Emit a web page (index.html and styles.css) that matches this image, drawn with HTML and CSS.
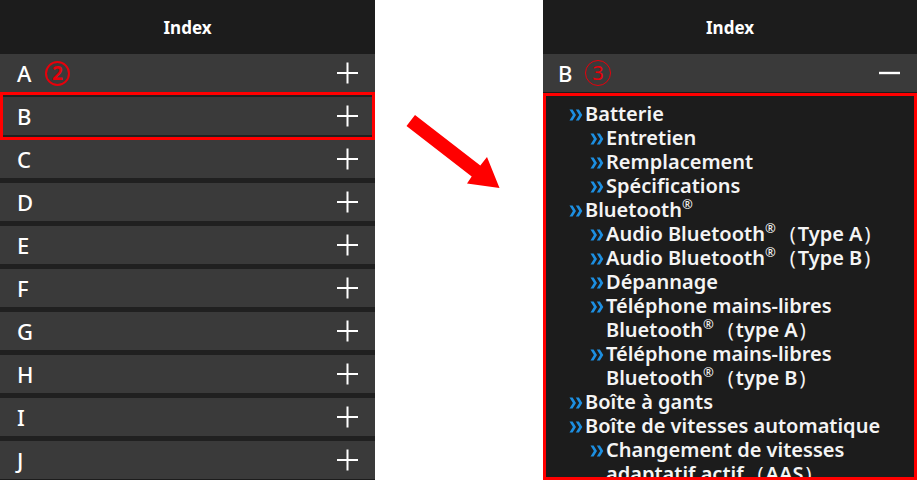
FILE: index.html
```html
<!DOCTYPE html>
<html lang="fr">
<head>
<meta charset="utf-8">
<title>Index</title>
<link rel="stylesheet" href="styles.css">
</head>
<body>
<div class="screen">
  <section class="panel panel-left">
    <header class="title">Index</header>
    <ul class="rows">
      <li class="row"><span class="letter">A</span><span class="badge badge-bold">2</span><svg class="icon" width="21" height="22" viewBox="0 0 21 22"><path d="M10.5 0.5V21.5M0 11H21" stroke="#fff" stroke-width="2" fill="none"/></svg></li>
      <li class="row selected"><span class="letter">B</span><svg class="icon" width="21" height="22" viewBox="0 0 21 22"><path d="M10.5 0.5V21.5M0 11H21" stroke="#fff" stroke-width="2" fill="none"/></svg></li>
      <li class="row"><span class="letter">C</span><svg class="icon" width="21" height="22" viewBox="0 0 21 22"><path d="M10.5 0.5V21.5M0 11H21" stroke="#fff" stroke-width="2" fill="none"/></svg></li>
      <li class="row"><span class="letter">D</span><svg class="icon" width="21" height="22" viewBox="0 0 21 22"><path d="M10.5 0.5V21.5M0 11H21" stroke="#fff" stroke-width="2" fill="none"/></svg></li>
      <li class="row"><span class="letter">E</span><svg class="icon" width="21" height="22" viewBox="0 0 21 22"><path d="M10.5 0.5V21.5M0 11H21" stroke="#fff" stroke-width="2" fill="none"/></svg></li>
      <li class="row"><span class="letter">F</span><svg class="icon" width="21" height="22" viewBox="0 0 21 22"><path d="M10.5 0.5V21.5M0 11H21" stroke="#fff" stroke-width="2" fill="none"/></svg></li>
      <li class="row"><span class="letter">G</span><svg class="icon" width="21" height="22" viewBox="0 0 21 22"><path d="M10.5 0.5V21.5M0 11H21" stroke="#fff" stroke-width="2" fill="none"/></svg></li>
      <li class="row"><span class="letter">H</span><svg class="icon" width="21" height="22" viewBox="0 0 21 22"><path d="M10.5 0.5V21.5M0 11H21" stroke="#fff" stroke-width="2" fill="none"/></svg></li>
      <li class="row"><span class="letter">I</span><svg class="icon" width="21" height="22" viewBox="0 0 21 22"><path d="M10.5 0.5V21.5M0 11H21" stroke="#fff" stroke-width="2" fill="none"/></svg></li>
      <li class="row"><span class="letter">J</span><svg class="icon" width="21" height="22" viewBox="0 0 21 22"><path d="M10.5 0.5V21.5M0 11H21" stroke="#fff" stroke-width="2" fill="none"/></svg></li>
    </ul>
  </section>

  <div class="gap">
    <svg class="arrow" width="168" height="200" viewBox="0 0 168 200">
      <polygon points="40,115 105.3,165.5 112,157 124.5,188 92,183.5 96.7,176.5 31.5,126" fill="#ff0000"/>
    </svg>
  </div>

  <section class="panel panel-right">
    <header class="title">Index</header>
    <div class="row row-open"><span class="letter">B</span><span class="badge">3</span><svg class="icon" width="21" height="4" viewBox="0 0 21 4"><path d="M0 2H21" stroke="#fff" stroke-width="2.4" fill="none"/></svg></div>
    <ul class="list">
      <li class="item l1"><span class="chev"><svg width="14" height="12" viewBox="0 0 14 12"><path d="M0.5 0.5H3.6L7 6L3.6 11.5H0.5L3.9 6Z M6.8 0.5H9.9L13.3 6L9.9 11.5H6.8L10.2 6Z" fill="#1d8fe1"/></svg></span><span class="txt">Batterie</span></li>
      <li class="item l2"><span class="chev"><svg width="14" height="12" viewBox="0 0 14 12"><path d="M0.5 0.5H3.6L7 6L3.6 11.5H0.5L3.9 6Z M6.8 0.5H9.9L13.3 6L9.9 11.5H6.8L10.2 6Z" fill="#1d8fe1"/></svg></span><span class="txt">Entretien</span></li>
      <li class="item l2"><span class="chev"><svg width="14" height="12" viewBox="0 0 14 12"><path d="M0.5 0.5H3.6L7 6L3.6 11.5H0.5L3.9 6Z M6.8 0.5H9.9L13.3 6L9.9 11.5H6.8L10.2 6Z" fill="#1d8fe1"/></svg></span><span class="txt">Remplacement</span></li>
      <li class="item l2"><span class="chev"><svg width="14" height="12" viewBox="0 0 14 12"><path d="M0.5 0.5H3.6L7 6L3.6 11.5H0.5L3.9 6Z M6.8 0.5H9.9L13.3 6L9.9 11.5H6.8L10.2 6Z" fill="#1d8fe1"/></svg></span><span class="txt">Spécifications</span></li>
      <li class="item l1"><span class="chev"><svg width="14" height="12" viewBox="0 0 14 12"><path d="M0.5 0.5H3.6L7 6L3.6 11.5H0.5L3.9 6Z M6.8 0.5H9.9L13.3 6L9.9 11.5H6.8L10.2 6Z" fill="#1d8fe1"/></svg></span><span class="txt">Bluetooth<sup>®</sup></span></li>
      <li class="item l2"><span class="chev"><svg width="14" height="12" viewBox="0 0 14 12"><path d="M0.5 0.5H3.6L7 6L3.6 11.5H0.5L3.9 6Z M6.8 0.5H9.9L13.3 6L9.9 11.5H6.8L10.2 6Z" fill="#1d8fe1"/></svg></span><span class="txt">Audio Bluetooth<sup>®</sup><span class="paren-open">(</span>Type A<span class="paren">)</span></span></li>
      <li class="item l2"><span class="chev"><svg width="14" height="12" viewBox="0 0 14 12"><path d="M0.5 0.5H3.6L7 6L3.6 11.5H0.5L3.9 6Z M6.8 0.5H9.9L13.3 6L9.9 11.5H6.8L10.2 6Z" fill="#1d8fe1"/></svg></span><span class="txt">Audio Bluetooth<sup>®</sup><span class="paren-open">(</span>Type B<span class="paren">)</span></span></li>
      <li class="item l2"><span class="chev"><svg width="14" height="12" viewBox="0 0 14 12"><path d="M0.5 0.5H3.6L7 6L3.6 11.5H0.5L3.9 6Z M6.8 0.5H9.9L13.3 6L9.9 11.5H6.8L10.2 6Z" fill="#1d8fe1"/></svg></span><span class="txt">Dépannage</span></li>
      <li class="item l2"><span class="chev"><svg width="14" height="12" viewBox="0 0 14 12"><path d="M0.5 0.5H3.6L7 6L3.6 11.5H0.5L3.9 6Z M6.8 0.5H9.9L13.3 6L9.9 11.5H6.8L10.2 6Z" fill="#1d8fe1"/></svg></span><span class="txt">Téléphone mains-libres<br>Bluetooth<sup>®</sup><span class="paren-open">(</span>type A<span class="paren">)</span></span></li>
      <li class="item l2"><span class="chev"><svg width="14" height="12" viewBox="0 0 14 12"><path d="M0.5 0.5H3.6L7 6L3.6 11.5H0.5L3.9 6Z M6.8 0.5H9.9L13.3 6L9.9 11.5H6.8L10.2 6Z" fill="#1d8fe1"/></svg></span><span class="txt">Téléphone mains-libres<br>Bluetooth<sup>®</sup><span class="paren-open">(</span>type B<span class="paren">)</span></span></li>
      <li class="item l1"><span class="chev"><svg width="14" height="12" viewBox="0 0 14 12"><path d="M0.5 0.5H3.6L7 6L3.6 11.5H0.5L3.9 6Z M6.8 0.5H9.9L13.3 6L9.9 11.5H6.8L10.2 6Z" fill="#1d8fe1"/></svg></span><span class="txt">Boîte à gants</span></li>
      <li class="item l1"><span class="chev"><svg width="14" height="12" viewBox="0 0 14 12"><path d="M0.5 0.5H3.6L7 6L3.6 11.5H0.5L3.9 6Z M6.8 0.5H9.9L13.3 6L9.9 11.5H6.8L10.2 6Z" fill="#1d8fe1"/></svg></span><span class="txt">Boîte de vitesses automatique</span></li>
      <li class="item l2"><span class="chev"><svg width="14" height="12" viewBox="0 0 14 12"><path d="M0.5 0.5H3.6L7 6L3.6 11.5H0.5L3.9 6Z M6.8 0.5H9.9L13.3 6L9.9 11.5H6.8L10.2 6Z" fill="#1d8fe1"/></svg></span><span class="txt">Changement de vitesses<br>adaptatif actif<span class="paren-open">(</span>AAS<span class="paren">)</span></span></li>
    </ul>
  </section>
</div>
</body>
</html>
```

FILE: styles.css
```css
* {
  box-sizing: border-box;
  margin: 0;
  padding: 0;
}

html,
body {
  width: 917px;
  height: 480px;
  overflow: hidden;
  background: #ffffff;
}

body {
  font-family: "Noto Sans", "DejaVu Sans", sans-serif;
  color: #ffffff;
}

.screen {
  display: flex;
  height: 480px;
}

.panel {
  display: flex;
  flex-direction: column;
  background: #1c1c1c;
  overflow: hidden;
  height: 480px;
}

.panel-left {
  width: 375px;
}

.panel-right {
  width: 374px;
}

.gap {
  flex: 1;
}

.arrow {
  display: block;
}

.title {
  flex: none;
  height: 54px;
  display: flex;
  align-items: center;
  justify-content: center;
  font-size: 17px;
  font-weight: 700;
  background: #1c1c1c;
}

.rows {
  list-style: none;
  display: flex;
  flex-direction: column;
  gap: 5px;
  background: #202020;
}

.row {
  position: relative;
  flex: none;
  height: 38px;
  background: #3a3a3a;
  display: flex;
  align-items: center;
  padding: 0 17px 0 17px;
}

.row-open {
  padding-left: 15px;
}

.letter {
  width: 28px;
  font-size: 22px;
  font-weight: 500;
  line-height: 1;
}

.row-open .letter {
  width: 27px;
}

.badge {
  width: 26px;
  height: 26px;
  border: 1.5px solid #e8000b;
  border-radius: 50%;
  color: #e8000b;
  font-size: 20px;
  font-weight: 400;
  line-height: 1;
  display: flex;
  align-items: center;
  justify-content: center;
}

.badge-bold {
  width: 25px;
  height: 25px;
  font-size: 19px;
  font-weight: 700;
  border-width: 2px;
}

.icon {
  margin-left: auto;
  display: block;
}

.row.selected::after {
  content: "";
  position: absolute;
  left: 0;
  right: 0;
  top: -5px;
  bottom: -5px;
  border: 3px solid #ff0000;
}

.list {
  flex: 1;
  min-height: 0;
  margin-top: 1px;
  border: 3px solid #ff0000;
  padding-top: 6px;
  overflow: hidden;
  list-style: none;
  font-size: 20px;
  font-weight: 600;
  line-height: 24px;
  color: #f4f4f4;
}

.item {
  display: flex;
  align-items: flex-start;
}

.l1 {
  padding-left: 23px;
}

.l2 {
  padding-left: 44px;
}

.chev {
  flex: none;
  width: 16px;
  height: 24px;
  display: flex;
  align-items: center;
  padding-top: 2px;
}

.chev svg {
  display: block;
}

.txt {
  white-space: nowrap;
}

.txt sup {
  font-size: 13px;
  line-height: 0;
  vertical-align: 8px;
  font-weight: 500;
}

.paren-open {
  margin-left: 14px;
  margin-right: 2px;
  font-weight: 400;
}

.paren {
  margin-left: 2px;
  font-weight: 400;
}
```
